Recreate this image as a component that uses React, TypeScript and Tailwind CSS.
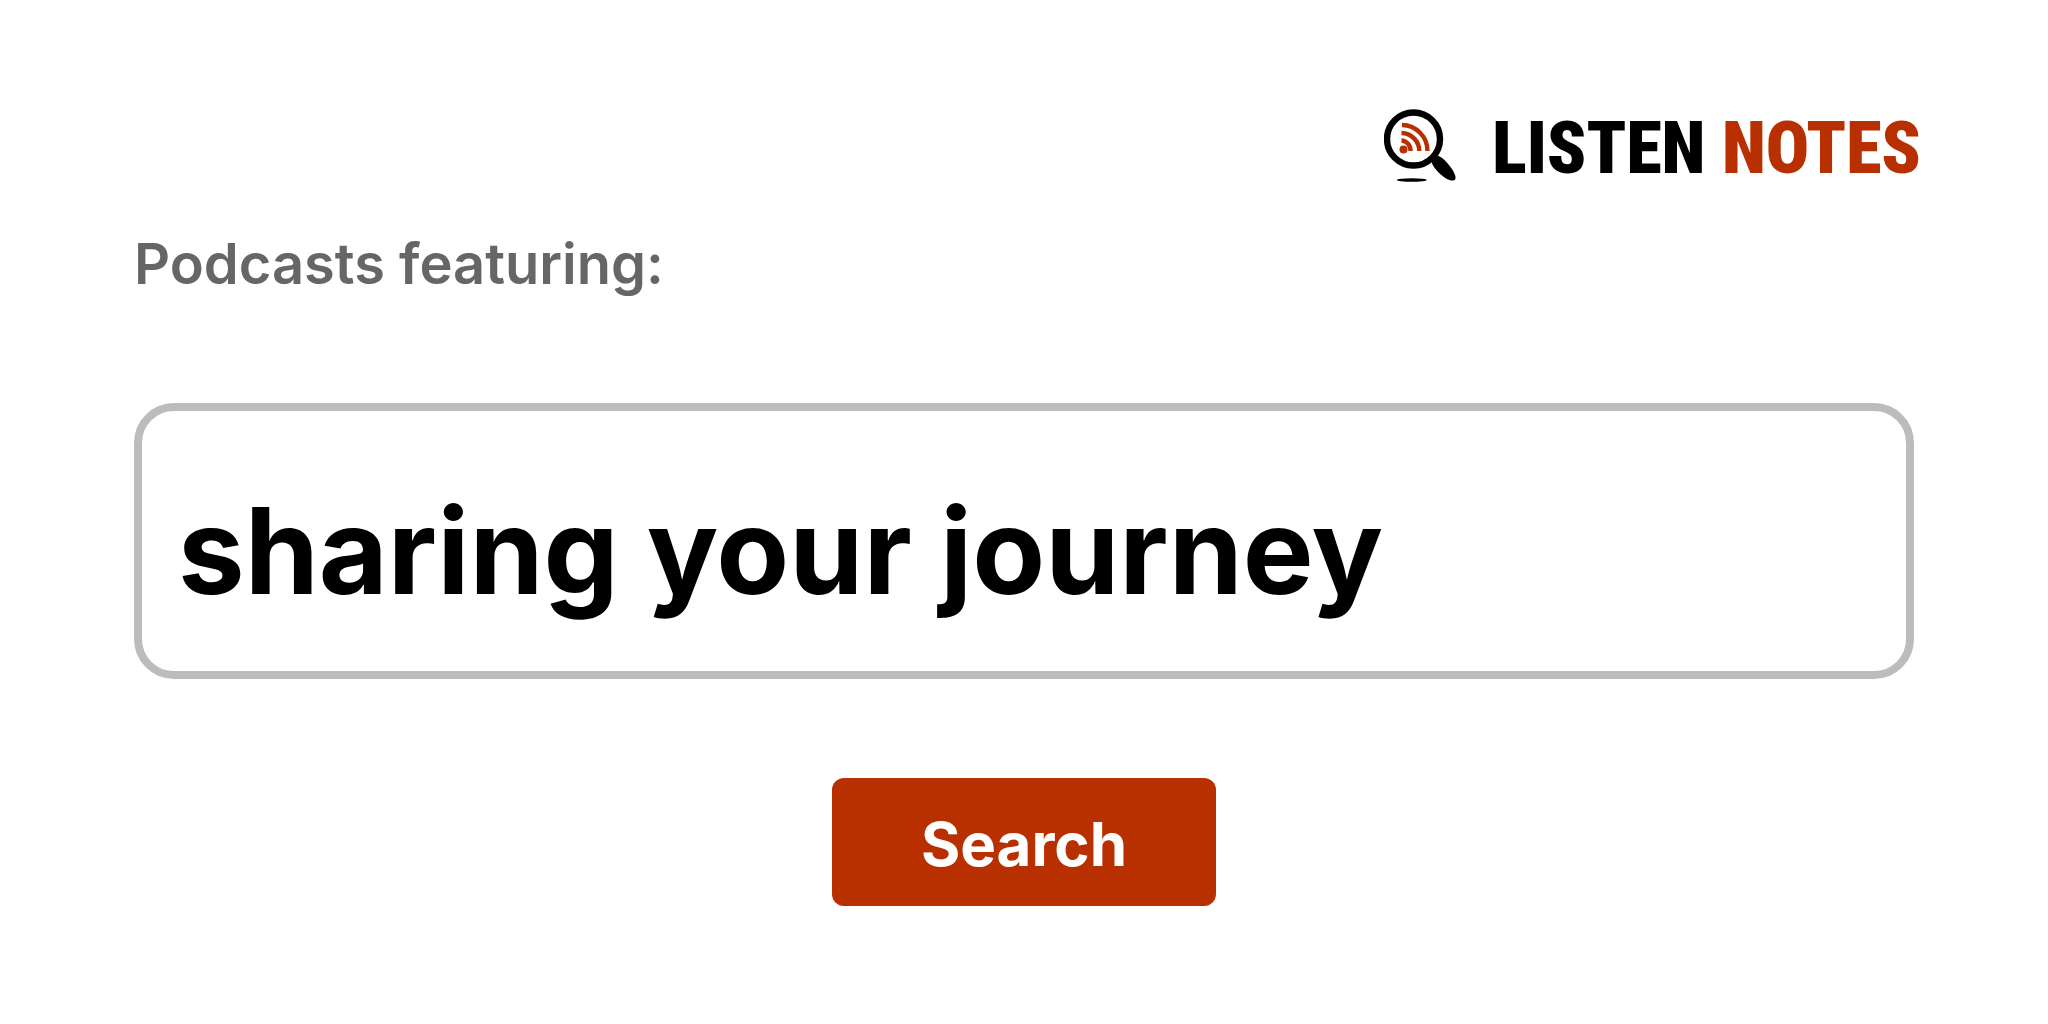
import { useState } from 'react'

function LogoMark() {
  return (
    <svg viewBox="0 0 76 80" className="w-[76px] h-20 shrink-0" aria-hidden="true">
      <circle cx="29.5" cy="30" r="26.5" fill="none" stroke="#000" strokeWidth="6.4" />
      <path d="M46 47 L52 53" stroke="#000" strokeWidth="6" />
      <path
        d="M47.5 52.5 Q51 50.500 53.500 46.500 C59 48.500 63 53.500 66.500 58 C69.500 62 72 66.500 71.500 69.500 C71 72 68 71.800 65.500 71 C60.500 69.300 54.500 64 51.500 60 C49.500 57.500 48 55 47.500 52.500 Z"
        fill="#000"
      />
      <ellipse cx="27.800" cy="71" rx="15" ry="1.800" fill="#000" />
      <circle cx="19.500" cy="40.500" r="4" fill="#b82f00" />
      <g fill="none" stroke="#b82f00" strokeWidth="4.4">
        <path d="M17.500 31.500 A9.500 10 0 0 1 26.500 42" />
        <path d="M17.500 24 A18 18 0 0 1 35.300 42" />
        <path d="M18 16 A26 26 0 0 1 43.500 42" />
      </g>
    </svg>
  )
}

export default function App() {
  const [query, setQuery] = useState('sharing your journey')

  return (
    <div className="min-h-screen bg-white font-['Inter',sans-serif]">
      <header className="flex justify-end pt-[109px] px-[127px]">
        <a href="#" className="flex items-center gap-8">
          <LogoMark />
          <span className="font-['Roboto_Condensed','Roboto',sans-serif] font-black text-[72px] leading-[80px] text-black whitespace-nowrap">
            LISTEN <span className="text-[#b82f00]">NOTES</span>
          </span>
        </a>
      </header>

      <form className="px-[134px] pt-[43px]" onSubmit={e => e.preventDefault()}>
        <label htmlFor="query" className="block text-[56px] leading-[64px] font-semibold text-[#666666]">
          Podcasts featuring:
        </label>
        <input
          id="query"
          type="text"
          value={query}
          onChange={e => setQuery(e.target.value)}
          className="block w-full h-[276px] mt-[107px] px-9 pt-5 rounded-[40px] border-8 border-[#bcbcbc] bg-white text-[119px] font-bold text-black outline-none"
        />
        <div className="flex justify-center mt-[99px]">
          <button
            type="submit"
            className="w-96 h-32 pt-1 rounded-xl bg-[#b82f00] text-[60px] font-bold text-white cursor-pointer"
          >
            Search
          </button>
        </div>
      </form>
    </div>
  )
}
